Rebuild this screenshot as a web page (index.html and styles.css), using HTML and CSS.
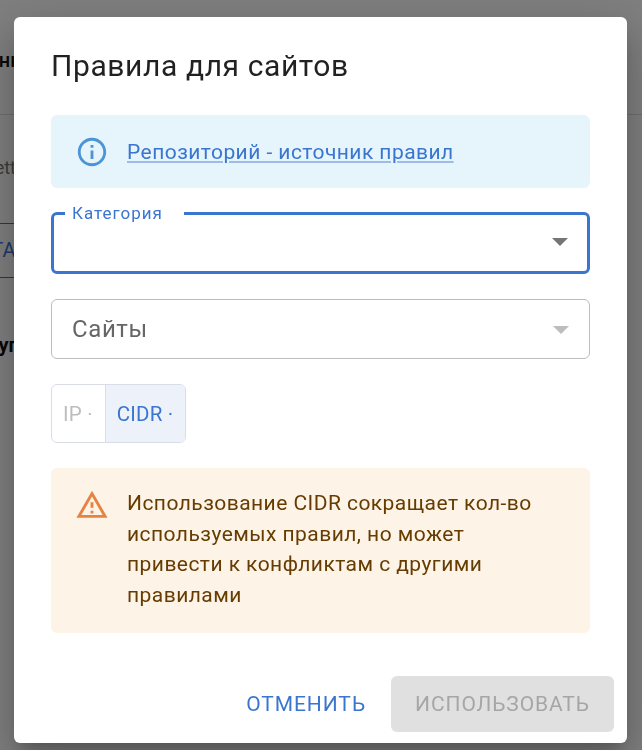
FILE: index.html
```html
<!DOCTYPE html>
<html lang="ru">
  <head>
    <meta charset="UTF-8" />
    <meta name="viewport" content="width=device-width, initial-scale=1.0" />
    <title>Правила для сайтов</title>
    <link rel="stylesheet" href="styles.css">
  </head>
  <body>
    <!-- страница за диалогом -->
    <div class="page">
      <div class="page-head">Данные</div>
      <div class="page-hint">Settings</div>
      <div class="page-btn">СТАРТ</div>
      <div class="page-group">Группы</div>
    </div>

    <div class="backdrop">
      <div class="dialog">
        <h2 class="dialog-title">Правила для сайтов</h2>

        <div class="alert alert-info">
          <svg class="alert-icon" viewBox="0 0 24 24">
            <path d="M11 7h2v2h-2zm0 4h2v6h-2zm1-9C6.48 2 2 6.48 2 12s4.48 10 10 10 10-4.48 10-10S17.52 2 12 2zm0 18c-4.41 0-8-3.59-8-8s3.59-8 8-8 8 3.59 8 8-3.59 8-8 8z" />
          </svg>
          <a class="alert-link" href="#">Репозиторий - источник правил</a>
        </div>

        <fieldset class="field field-focused">
          <legend class="field-legend">Категория</legend>
          <span class="field-arrow"></span>
        </fieldset>

        <div class="field field-disabled">
          <span class="field-value">Сайты</span>
          <span class="field-arrow"></span>
        </div>

        <div class="toggle">
          <span class="toggle-item">IP ·</span>
          <span class="toggle-item toggle-active">CIDR ·</span>
        </div>

        <div class="alert alert-warning">
          <svg class="alert-icon" viewBox="0 0 24 24">
            <path d="M12 5.99L19.53 19H4.47L12 5.99M12 2L1 21h22L12 2zm1 14h-2v2h2v-2zm0-6h-2v4h2v-4z" />
          </svg>
          <p class="alert-text">Использование CIDR сокращает кол-во используемых правил, но может привести к конфликтам с другими правилами</p>
        </div>

        <div class="dialog-actions">
          <button type="button" class="btn btn-text">Отменить</button>
          <button type="button" class="btn btn-disabled" disabled>Использовать</button>
        </div>
      </div>
    </div>
  </body>
</html>
```

FILE: styles.css
```css
* {
  box-sizing: border-box;
}
html, body {
  height: 100%;
}
body {
  margin: 0;
  overflow: hidden;
  background-color: white;
  font-family: Roboto, "Liberation Sans", sans-serif;
}

/* страница за диалогом */
.page {
  height: 750px;
  overflow: hidden;
}
.page-head {
  height: 115px;
  padding-top: 48px;
  text-indent: -27px;
  font-size: 20px;
  font-weight: 500;
  color: #111;
  border-bottom: 1px solid #ddd;
}
.page-hint {
  margin: 42px 0 0 -16px;
  font-size: 18px;
  color: #777;
}
.page-btn {
  width: 200px;
  height: 55px;
  margin: 45px 0 0 -120px;
  line-height: 53px;
  font-size: 20px;
  color: #3a75d0;
  border: 1px solid #3a75d0;
  text-align: right;
  padding-right: 39px;
}
.page-group {
  margin: 55px 0 0 -22px;
  font-size: 20px;
  font-weight: 700;
  color: #111;
}

.backdrop {
  position: fixed;
  top: 0;
  left: 0;
  width: 100%;
  height: 100%;
  display: flex;
  justify-content: center;
  padding-top: 17px;
  background-color: rgba(0, 0, 0, 0.5);
}
.dialog {
  width: 613px;
  height: 726px;
  margin-left: -1px;
  padding: 0 37px;
  display: flex;
  flex-direction: column;
  background-color: white;
  border-radius: 6px;
  box-shadow: 0 11px 15px -7px rgba(0, 0, 0, 0.2), 0 24px 38px 3px rgba(0, 0, 0, 0.14), 0 9px 46px 8px rgba(0, 0, 0, 0.12);
}
.dialog-title {
  margin: 0;
  padding-top: 29px;
  height: 98px;
  font-size: 30px;
  line-height: 40px;
  letter-spacing: 0.6px;
  font-weight: 400;
  color: rgba(0, 0, 0, 0.87);
}

.alert {
  display: flex;
  border-radius: 6px;
  padding-left: 24px;
}
.alert-icon {
  flex: none;
  width: 34px;
  height: 34px;
}
.alert-info {
  height: 73px;
  align-items: center;
  background-color: #e6f4fb;
}
.alert-info .alert-icon {
  fill: #4b94d6;
}
.alert-link {
  margin-left: 18px;
  font-size: 21px;
  letter-spacing: 0.45px;
  color: #3a75d0;
  text-decoration: underline;
  text-decoration-color: #9dbce8;
}
.alert-warning {
  height: 165px;
  margin-top: 25px;
  padding-top: 20px;
  background-color: #fdf3e7;
}
.alert-warning .alert-icon {
  fill: #e58343;
}
.alert-text {
  margin: 0 0 0 18px;
  width: 420px;
  font-size: 21px;
  line-height: 30.7px;
  letter-spacing: 0.45px;
  color: #663c00;
}

.field {
  position: relative;
  margin: 0;
  padding: 0;
  min-width: 0;
  border-radius: 6px;
}
.field-focused {
  height: 70px;
  margin-top: 16px;
  border: 3px solid #3a75d0;
  padding-left: 11px;
}
.field-legend {
  padding: 0 10px 0 7px;
  width: 119px;
  height: 19px;
  font-size: 17px;
  line-height: 18px;
  letter-spacing: 1px;
  color: #3a75d0;
}
.field-disabled {
  height: 60px;
  margin-top: 25px;
  border: 1.5px solid #bdbdbd;
  padding-left: 20px;
  display: flex;
  align-items: center;
}
.field-value {
  font-size: 24px;
  letter-spacing: 0.6px;
  color: #666;
}
.field-arrow {
  position: absolute;
  right: 20px;
  top: 50%;
  margin-top: -3px;
  width: 0;
  height: 0;
  border-left: 8px solid transparent;
  border-right: 8px solid transparent;
  border-top: 8px solid #757575;
}
.field-focused .field-arrow {
  right: 19px;
  margin-top: 15px;
}
.field-disabled .field-arrow {
  border-top-color: #bdbdbd;
}

.toggle {
  display: flex;
  align-self: flex-start;
  height: 59px;
  margin-top: 25px;
  border: 1.5px solid #d9dee6;
  border-radius: 6px;
  overflow: hidden;
}
.toggle-item {
  display: flex;
  align-items: center;
  padding: 0 12px 0 11px;
  font-size: 20.5px;
  letter-spacing: 0.2px;
  color: #bdbdbd;
}
.toggle-active {
  color: #3a75d0;
  background-color: #edf2fa;
  border-left: 1.5px solid #d9dee6;
}

.dialog-actions {
  display: flex;
  justify-content: flex-end;
  align-items: center;
  gap: 25px;
  margin: 43px -24px 0 0;
}
.btn {
  height: 56px;
  border: none;
  border-radius: 6px;
  background: none;
  font-family: inherit;
  font-size: 21px;
  letter-spacing: 0.9px;
  text-transform: uppercase;
}
.btn-text {
  padding: 0;
  color: #3a75d0;
}
.btn-disabled {
  width: 223px;
  background-color: #e0e0e0;
  color: #a6a6a6;
}
```
